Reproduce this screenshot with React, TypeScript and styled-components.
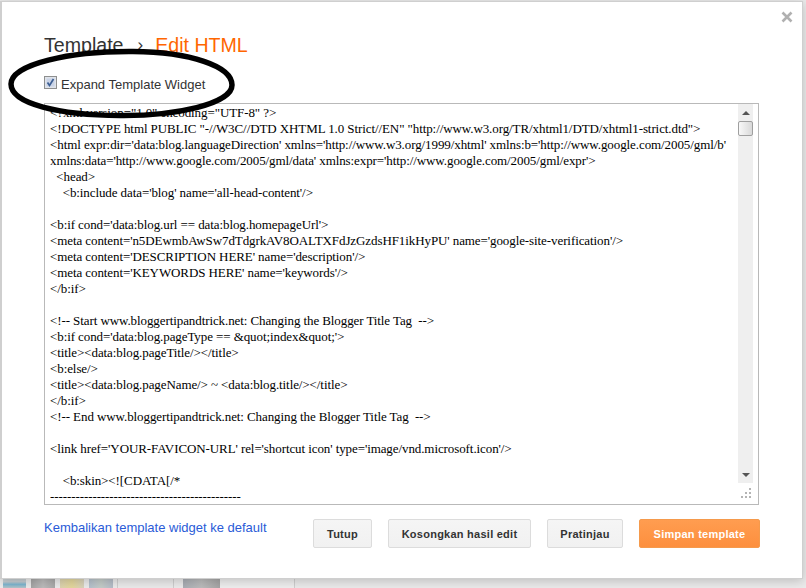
import React from "react";
import styled, { createGlobalStyle } from "styled-components";

const GlobalStyle = createGlobalStyle`
  html, body {
    margin: 0;
    padding: 0;
    background: #ebebeb;
  }
  body {
    width: 806px;
    height: 588px;
    overflow: hidden;
    font-family: "Liberation Sans", Arial, sans-serif;
  }
`;

const codeLines = [
  `<?xml version="1.0" encoding="UTF-8" ?>`,
  `<!DOCTYPE html PUBLIC "-//W3C//DTD XHTML 1.0 Strict//EN" "http://www.w3.org/TR/xhtml1/DTD/xhtml1-strict.dtd">`,
  `<html expr:dir='data:blog.languageDirection' xmlns='http://www.w3.org/1999/xhtml' xmlns:b='http://www.google.com/2005/gml/b'`,
  `xmlns:data='http://www.google.com/2005/gml/data' xmlns:expr='http://www.google.com/2005/gml/expr'>`,
  `  <head>`,
  `    <b:include data='blog' name='all-head-content'/>`,
  ``,
  `<b:if cond='data:blog.url == data:blog.homepageUrl'>`,
  `<meta content='n5DEwmbAwSw7dTdgrkAV8OALTXFdJzGzdsHF1ikHyPU' name='google-site-verification'/>`,
  `<meta content='DESCRIPTION HERE' name='description'/>`,
  `<meta content='KEYWORDS HERE' name='keywords'/>`,
  `</b:if>`,
  ``,
  `<!-- Start www.bloggertipandtrick.net: Changing the Blogger Title Tag  -->`,
  `<b:if cond='data:blog.pageType == &quot;index&quot;'>`,
  `<title><data:blog.pageTitle/></title>`,
  `<b:else/>`,
  `<title><data:blog.pageName/> ~ <data:blog.title/></title>`,
  `</b:if>`,
  `<!-- End www.bloggertipandtrick.net: Changing the Blogger Title Tag  -->`,
  ``,
  `<link href='YOUR-FAVICON-URL' rel='shortcut icon' type='image/vnd.microsoft.icon'/>`,
  ``,
  `    <b:skin><![CDATA[/*`,
  `---------------------------------------------`,
];

const Dialog = styled.div`
  position: relative;
  box-sizing: border-box;
  width: 803px;
  height: 578px;
  margin-top: 1px;
  padding: 32px 46px 0 42px;
  background: #fff;
  border: 1px solid #cfcfcf;
  border-left-width: 2px;
  box-shadow: 0 2px 10px rgba(0, 0, 0, 0.2);
`;

const CloseIcon = styled.svg`
  position: absolute;
  top: 9px;
  right: 9px;
  width: 12px;
  height: 12px;
`;

const Breadcrumb = styled.div`
  display: flex;
  align-items: center;
  height: 22px;
  font-size: 19.6px;
  color: #333;
`;

const Separator = styled.span`
  margin: 0 12px 0 14px;
  font-size: 17px;
  color: #333;
`;

const Current = styled.span`
  color: #ff6600;
`;

const ExpandRow = styled.label`
  display: flex;
  align-items: center;
  gap: 4px;
  margin-top: 19px;
  height: 18px;
  font-size: 13px;
  color: #333;
`;

const CheckBox = styled.svg`
  width: 13px;
  height: 13px;
  margin-top: -3px;
`;

const Editor = styled.div`
  display: flex;
  box-sizing: border-box;
  width: 715px;
  height: 402px;
  margin-top: 10px;
  padding-left: 5px;
  border: 1px solid #b9b9b9;
  overflow: hidden;
`;

const Code = styled.pre`
  flex: 1;
  margin: 0;
  padding-top: 1px;
  font-family: "Liberation Serif", "Times New Roman", serif;
  font-size: 13px;
  letter-spacing: -0.09px;
  line-height: 16px;
  color: #000;
  white-space: pre;
  overflow: hidden;
`;

const ScrollColumn = styled.div`
  display: flex;
  flex-direction: column;
  flex: none;
  width: 20px;
`;

const ScrollBar = styled.div`
  display: flex;
  flex-direction: column;
  align-items: center;
  width: 15px;
  height: 379px;
  background: #efefef;
`;

const ArrowButton = styled.div<{ $down?: boolean }>`
  width: 0;
  height: 0;
  margin: ${(p) => (p.$down ? "auto 0 6px" : "7px 0 0")};
  border-left: 4px solid transparent;
  border-right: 4px solid transparent;
  ${(p) =>
    p.$down
      ? "border-top: 4px solid #555;"
      : "border-bottom: 4px solid #555;"}
`;

const Thumb = styled.div`
  box-sizing: border-box;
  width: 15px;
  height: 15px;
  margin-top: 6px;
  border: 1px solid #9f9f9f;
  border-radius: 2px;
  background: linear-gradient(to right, #f8f8f8, #d9d9d9);
`;

const ResizeGrip = styled.svg`
  width: 12px;
  height: 12px;
  margin: 4px 0 0 2px;
`;

const Footer = styled.div`
  display: flex;
  align-items: flex-start;
  gap: 16px;
  margin-top: 14px;
  width: 716px;
`;

const ResetLink = styled.a`
  margin-right: auto;
  margin-top: 1px;
  font-size: 13px;
  color: #2a5bd7;
`;

const Button = styled.button<{ $primary?: boolean; $width: number }>`
  box-sizing: border-box;
  width: ${(p) => p.$width}px;
  height: 29px;
  padding: 0;
  font-family: inherit;
  font-size: 11px;
  font-weight: 700;
  letter-spacing: 0.25px;
  border-radius: 2px;
  border: 1px solid ${(p) => (p.$primary ? "#f59a4c" : "#dcdcdc")};
  color: ${(p) => (p.$primary ? "#fff" : "#333")};
  background: ${(p) =>
    p.$primary
      ? "linear-gradient(to bottom, #ff9d50, #fd8f3e)"
      : "linear-gradient(to bottom, #f5f5f5, #f1f1f1)"};
`;

const Scribble = styled.svg`
  position: absolute;
  left: 4px;
  top: 42px;
  width: 232px;
  height: 80px;
  pointer-events: none;
`;

const BackdropStrip = styled.div`
  display: flex;
  height: 9px;
  padding-left: 3px;
`;

const Thumbnail = styled.div<{ $fill: string; $width: number; $gap: number }>`
  width: ${(p) => p.$width}px;
  margin-right: ${(p) => p.$gap}px;
  background: ${(p) => p.$fill};
`;

const thumbs = [
  { fill: "linear-gradient(#c4ccd0 30%, #7db6d0 60%, #b4c4c8)", width: 23, gap: 5 },
  { fill: "linear-gradient(90deg, #a4a4a4, #bcbcbc 50%, #a8a8a8)", width: 24, gap: 5 },
  { fill: "linear-gradient(90deg, #ddd3b0, #e4d79c 50%, #d8d2bc)", width: 24, gap: 5 },
  { fill: "linear-gradient(90deg, #b4c0cc, #c4ccc8 50%, #b4bcc8)", width: 24, gap: 4 },
  { fill: "#cfcfcf", width: 1, gap: 55 },
  { fill: "#cfcfcf", width: 1, gap: 9 },
  { fill: "linear-gradient(90deg, #a8adb4, #bcbcbc 50%, #a4a4a4)", width: 37, gap: 0 },
  { fill: "#efefef", width: 74, gap: 0 },
  { fill: "#cfcfcf", width: 1, gap: 0 },
];

export default function App() {
  return (
    <>
      <GlobalStyle />
      <Dialog>
        <CloseIcon viewBox="0 0 12 12">
          <path d="M1.5 1.5 L10.5 10.5 M10.5 1.5 L1.5 10.5" stroke="#b0b0b0" strokeWidth="2.6" />
        </CloseIcon>
        <Breadcrumb>
          Template
          <Separator>›</Separator>
          <Current>Edit HTML</Current>
        </Breadcrumb>
        <ExpandRow>
          <CheckBox viewBox="0 0 13 13">
            <rect x="0.5" y="0.5" width="12" height="12" fill="#dfe3ea" stroke="#8e8f8f" />
            <rect x="2.5" y="2.5" width="8" height="8" fill="#c9d3e6" />
            <path d="M3.5 6.5 L5.5 9.5 L9.5 3" fill="none" stroke="#3d5f94" strokeWidth="1.7" />
          </CheckBox>
          Expand Template Widget
        </ExpandRow>
        <Editor>
          <Code>{codeLines.join("\n")}</Code>
          <ScrollColumn>
            <ScrollBar>
              <ArrowButton />
              <Thumb />
              <ArrowButton $down />
            </ScrollBar>
            <ResizeGrip viewBox="0 0 12 12">
              <g fill="#b4b4b4">
                <rect x="9" y="1" width="2" height="2" />
                <rect x="5" y="5" width="2" height="2" />
                <rect x="9" y="5" width="2" height="2" />
                <rect x="1" y="9" width="2" height="2" />
                <rect x="5" y="9" width="2" height="2" />
                <rect x="9" y="9" width="2" height="2" />
              </g>
            </ResizeGrip>
          </ScrollColumn>
        </Editor>
        <Footer>
          <ResetLink>Kembalikan template widget ke default</ResetLink>
          <Button $width={59}>Tutup</Button>
          <Button $width={143}>Kosongkan hasil edit</Button>
          <Button $width={76}>Pratinjau</Button>
          <Button $primary $width={121}>Simpan template</Button>
        </Footer>
        {/* hand-drawn marker ring, coordinates are page pixels */}
        <Scribble viewBox="6 44 232 80">
          <path
            d="M11 84 C11 64 70 51 133 51.5 C190 52 232 66 232 85 C232 104 175 116 120 115.5 C60 115 11 104 11 84 Z"
            fill="none"
            stroke="#000"
            strokeWidth="5.5"
          />
        </Scribble>
      </Dialog>
      <BackdropStrip>
        {thumbs.map((t, i) => (
          <Thumbnail key={i} $fill={t.fill} $width={t.width} $gap={t.gap} />
        ))}
      </BackdropStrip>
    </>
  );
}
